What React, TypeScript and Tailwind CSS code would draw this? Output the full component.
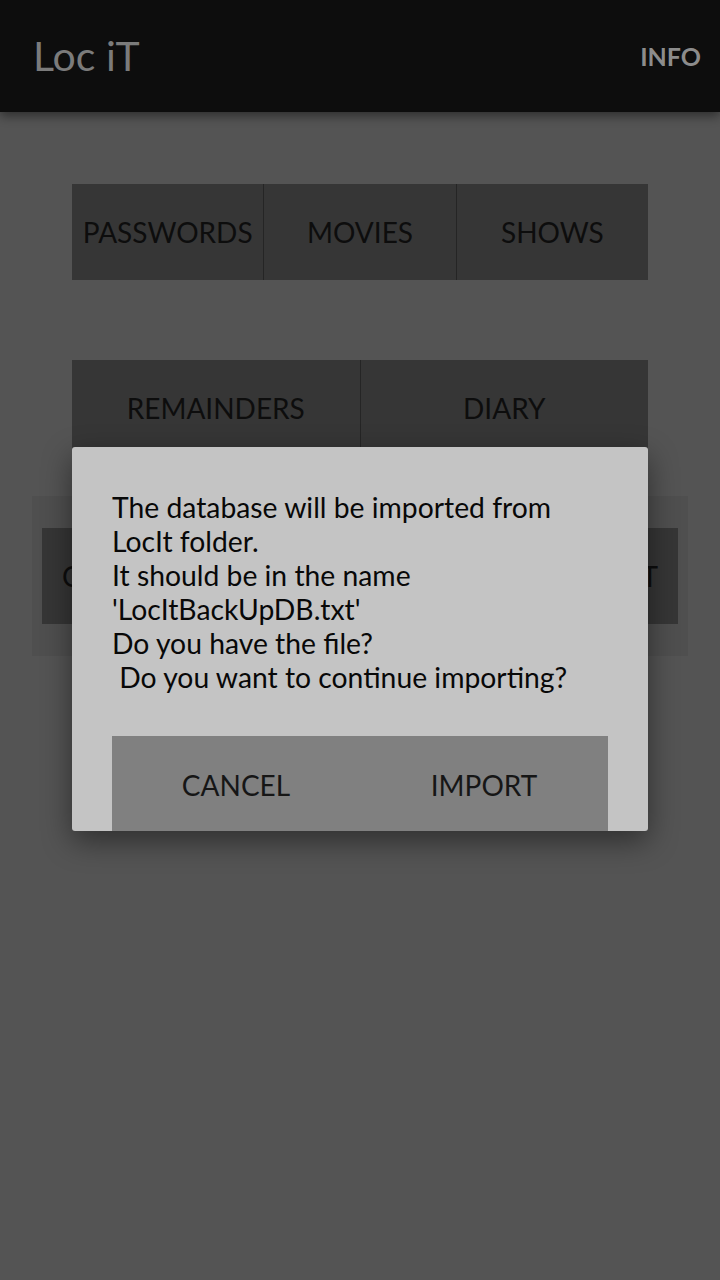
const font = { fontFamily: "Lato, 'Open Sans', sans-serif" }

const dialogLines = [
  "The database will be imported from",
  "LocIt folder.",
  "It should be in the name",
  "'LocItBackUpDB.txt'",
  "Do you have the file?",
  " Do you want to continue importing?",
]

export default function App() {
  return (
    <div className="relative w-[720px] h-[1280px] overflow-hidden bg-[#545454]" style={font}>
      {/* Toolbar */}
      <header className="relative z-10 flex h-[112px] items-center justify-between bg-[#0d0d0d] pl-[33px] pr-[19px] shadow-[0_4px_10px_rgba(0,0,0,0.45)]">
        <span className="text-[41px] leading-none text-[#7b7b7b] -mt-[2px]">Loc iT</span>
        <span className="text-[25px] font-bold leading-none text-[#8c8c8c] mt-[1px]">INFO</span>
      </header>

      {/* Menu grid */}
      <main className="flex flex-col items-center pt-[72px]">
        <div className="flex h-[96px] w-[576px] bg-[#363636]">
          <button className="flex-1 border-r border-[#252525] text-[28px] text-[#0d0d0d]">PASSWORDS</button>
          <button className="flex-1 border-r border-[#252525] text-[28px] text-[#0d0d0d]">MOVIES</button>
          <button className="flex-1 text-[28px] text-[#0d0d0d]">SHOWS</button>
        </div>

        <div className="mt-[80px] flex h-[96px] w-[576px] bg-[#363636]">
          <button className="flex-1 border-r border-[#252525] text-[28px] text-[#0d0d0d]">REMAINDERS</button>
          <button className="flex-1 text-[28px] text-[#0d0d0d]">DIARY</button>
        </div>

        <div className="mt-[40px] w-[656px] bg-[#4f4f4f] px-[10px] py-[32px]">
          <div className="flex h-[96px] items-center justify-between bg-[#363636] px-[20px] text-[28px] text-[#0d0d0d]">
            <span>CREATE</span>
            <span>IMPORT</span>
          </div>
        </div>
      </main>

      {/* Import dialog */}
      <div className="absolute left-[72px] top-[447px] flex h-[384px] w-[576px] flex-col overflow-hidden rounded-[3px] bg-[#c4c4c4] px-[40px] pt-[43px] shadow-[0_10px_30px_rgba(0,0,0,0.45)]">
        <div className="text-[28.3px] leading-[34px] text-[#080808]">
          {dialogLines.map((line, i) => (
            <div key={i} className="whitespace-pre">{line}</div>
          ))}
        </div>
        <div className="mt-[42px] flex h-[95px] shrink-0 bg-[#808080]">
          <button className="flex-1 pt-[2px] text-[28px] text-[#161616]">CANCEL</button>
          <button className="flex-1 pt-[2px] text-[28px] text-[#161616]">IMPORT</button>
        </div>
      </div>
    </div>
  )
}
